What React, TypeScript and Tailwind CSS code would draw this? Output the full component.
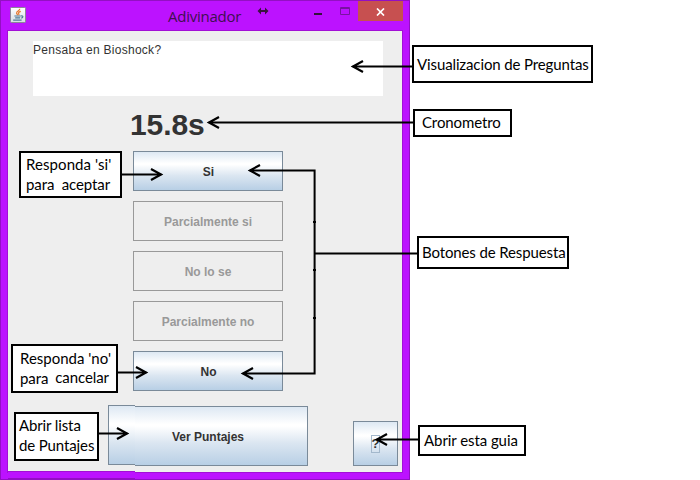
import React from "react";

const swing = "font-['Liberation_Sans',Arial,sans-serif]";
const raised =
  "border border-[#7a8a99] bg-[linear-gradient(to_bottom,#dde8f3_0%,#ffffff_30%,#ffffff_33%,#dbe6f1_62%,#b8cfe5_100%)] text-[#333]";

function AnswerButton({ label, enabled = false }: { label: string; enabled?: boolean }) {
  return (
    <button
      className={`flex h-10 w-[150px] items-center justify-center pt-px text-[12px] font-bold ${swing} ${
        enabled ? `pl-px ${raised}` : "border border-[#999] text-[#999]"
      }`}
    >
      {label}
    </button>
  );
}

function Callout({ className, children }: { className: string; children: React.ReactNode }) {
  return (
    <div
      className={`absolute flex flex-col justify-center border-2 border-black bg-white pb-[2px] whitespace-pre text-black font-[Lato,'Open_Sans',sans-serif] text-[15px] leading-5 ${className}`}
    >
      {children}
    </div>
  );
}

function JavaIcon() {
  return (
    <svg width="16" height="16" viewBox="0 0 16 16" className="ml-[9px] mt-[6px]">
      <defs>
        <linearGradient id="tile" x1="0" y1="0" x2="0" y2="1">
          <stop offset="0" stopColor="#fff" />
          <stop offset="1" stopColor="#d5dde2" />
        </linearGradient>
      </defs>
      <rect x=".5" y=".5" width="15" height="15" rx="1" fill="url(#tile)" stroke="#8b8798" />
      <path d="M9.8 1.8C10 3.7 6.3 4.4 6.6 6.1c.1.9 1.1 1.3 1 2.2M10.8 4.4C8.4 5 8 6 8.8 6.9c.4.5.2.9-.2 1.3" fill="none" stroke="#e77b31" strokeWidth="1.2" />
      <path d="M4.4 9h6.4M5.2 10.8h5M3.2 13.2h8.4M11 9c2.5-.6 2.4 1.7.2 2.2" fill="none" stroke="#4f7b97" strokeWidth="1.2" />
    </svg>
  );
}

function TitleBar() {
  return (
    <header className="flex h-[30px] w-full items-start">
      <JavaIcon />
      <h1 className="ml-[142px] mt-[4px] w-[74px] whitespace-nowrap font-['Open_Sans','Noto_Sans',sans-serif] text-[15px] leading-[22px] tracking-[-0.25px] text-[#40104f]">
        Adivinador
      </h1>
      <svg className="ml-[15px] mt-[5px]" width="12" height="10" viewBox="0 0 12 10">
        <path d="M2 5h8" stroke="#39143f" strokeWidth="2" />
        <path d="M.5 5 4 1.6v6.8zM11.5 5 8 1.6v6.8z" fill="#39143f" />
      </svg>
      <svg className="ml-[45px] mt-[6px]" width="36" height="10" viewBox="0 0 36 10">
        <path d="M0 6h8v2H0z" fill="#321239" />
        <path d="M26.5 .5h9v7h-9zM26 1.5h10" stroke="#7813a0" fill="none" />
      </svg>
      <button className="ml-[8px] flex h-5 w-[45px] items-center justify-center bg-[#c75050]">
        <svg className="mt-px" width="9" height="8" viewBox="0 0 9 8">
          <path d="m1 .5 7 7M8 .5l-7 7" stroke="white" strokeWidth="1.7" />
        </svg>
      </button>
    </header>
  );
}

function Arrows() {
  return (
    <svg className="pointer-events-none absolute left-0 top-0" width="700" height="480" viewBox="0 0 700 480">
      <g fill="none" stroke="#000" strokeWidth="2">
        <path d="M413 66.5H355M413 122.5H210M121 174.5H160M417 253.5H315M314.6 169.5V374.5M315 170.5H250M315 373.5H244M117 372.5H145M98 433.5H126M418 439.5H378" />
        <path d="m363 61-10 5.5 10 5.5M219 117l-10 5.5 10 5.5M151 169l10 5.5-10 5.5M260 165l-10 5.5 10 5.5M253 368l-10 5.5 10 5.5M136 367l10 5.5-10 5.5M117 428l10 5.5-10 5.5M387 434l-10 5.5 10 5.5" strokeWidth="2.2" />
      </g>
      <g fill="#000">
        <path d="m351 66.5 6-2.5v5zM207 122.5l6-2.5v5zM163 174.5l-6-2.5v5zM248 170.5l6-2.5v5zM241 373.5l6-2.5v5zM148 372.5l-6-2.5v5zM129 433.5l-6-2.5v5zM375 439.5l6-2.5v5z" />
        <path d="M313 221h3v2h-3zM313 269h3v2h-3zM313 317h3v2h-3z" />
      </g>
    </svg>
  );
}

export default function App() {
  return (
    <main className="relative h-[480px] w-[700px] overflow-hidden bg-white">
      <section className="flex h-[480px] w-[410px] flex-col border border-[#930fc4] bg-[#bc12ff]">
        <TitleBar />
        <div className="mx-[6px] -mt-px flex h-[443px] flex-col border border-[#a20fd6] bg-[#eee]">
          <div className={`ml-[25px] mt-[10px] h-[55px] w-[350px] bg-white text-[12px] leading-[18px] tracking-[0.28px] text-[#333] ${swing}`}>
            Pensaba en Bioshock?
          </div>
          <div className={`ml-[122px] mt-[9px] h-[46px] text-[30px] font-bold leading-[40px] tracking-[-0.1px] text-[#333] ${swing}`}>
            15.8s
          </div>
          <div className="ml-[125px] flex flex-col gap-[10px]">
            <AnswerButton label="Si" enabled />
            <AnswerButton label="Parcialmente si" />
            <AnswerButton label="No lo se" />
            <AnswerButton label="Parcialmente no" />
            <AnswerButton label="No" enabled />
          </div>
          <div className="ml-[100px] mt-[15px] flex items-end">
            <button className={`relative flex h-[60px] w-[200px] items-center justify-center pt-px text-[12px] font-bold ${swing} ${raised}`}>
              Ver Puntajes
              <span className="absolute -left-px -top-[2px] h-[61px] w-[27px] bg-[#eee]">
                <span className={`block h-[60px] w-full border-r-0! ${raised}`} />
              </span>
            </button>
            <button className={`ml-[45px] flex h-[45px] w-[45px] items-center justify-center text-[13px] font-bold ${swing} ${raised}`}>
              <span className="flex h-[18px] w-[9px] items-center justify-center border border-[#a3b8cc]">?</span>
            </button>
          </div>
        </div>
      </section>
      <div className="absolute left-[8px] top-[471px] h-[9px] w-[127px] border-t border-b-2 border-t-[#a20fd6] border-b-[#930fc4] bg-[#bc12ff]" />
      <Callout className="left-[412px] top-[45px] h-[38px] w-[181px] pb-0! pl-[3px] tracking-[-0.12px]">
        Visualizacion de Preguntas
      </Callout>
      <Callout className="left-[413px] top-[109px] h-[28px] w-[99px] pl-[7px] tracking-[-0.1px]">Cronometro</Callout>
      <Callout className="left-[19px] top-[151px] h-[47px] w-[103px] pl-[5px]">
        <span className="tracking-[0.08px]">Responda 'si'</span>
        <span className="tracking-[-0.1px]">para  aceptar</span>
      </Callout>
      <Callout className="left-[417px] top-[236px] h-[33px] w-[152px] pl-[3px] tracking-[-0.12px]">
        Botones de Respuesta
      </Callout>
      <Callout className="left-[11px] top-[344px] h-[49px] w-[107px] pb-px! pl-[7px]">
        <span>Responda 'no'</span>
        <span className="flex gap-[7px] tracking-[-0.1px]">
          <span>para</span>
          <span className="-mt-px">cancelar</span>
        </span>
      </Callout>
      <Callout className="left-[14px] top-[412px] h-[49px] w-[85px] pb-[3px]! pl-[3px] tracking-[-0.12px]">
        <span>Abrir lista</span>
        <span>de Puntajes</span>
      </Callout>
      <Callout className="left-[418px] top-[425px] h-[31px] w-[108px] pl-[4px] tracking-[-0.07px]">Abrir esta guia</Callout>
      <Arrows />
    </main>
  );
}
